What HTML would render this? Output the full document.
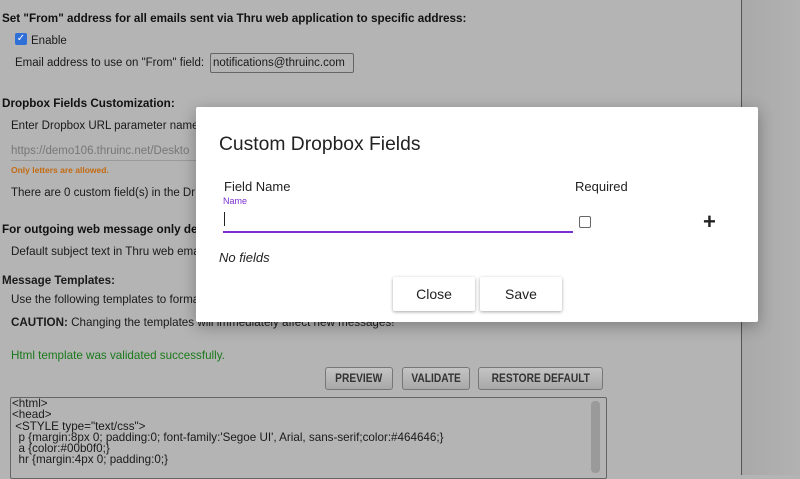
<!DOCTYPE html>
<html><head><style>
body{margin:0;width:800px;height:475px;overflow:hidden;background:#b4b4b4;font-family:"Liberation Sans",sans-serif;position:relative;color:#111}
.a{position:absolute;white-space:nowrap}
.b{font-weight:bold;font-size:11.7px}
.t{font-size:11.5px;color:#1a1a1a}
.n{font-size:12px;transform-origin:0 0;transform:scaleX(.97);color:#1a1a1a}
.btn{position:absolute;top:367px;height:21px;border:1px solid #777;border-radius:3px;background:linear-gradient(#c4c4c4,#a8a8a8);font-size:12px;font-weight:bold;color:#333;text-align:center;line-height:21px}
.mb{position:absolute;top:277px;height:34px;width:82px;background:#fff;box-shadow:0 1px 3px rgba(0,0,0,.35);font-size:14px;text-align:center;line-height:34px;color:#222;border-radius:2px}
</style></head><body>
<div class="a" style="left:741px;top:0;width:59px;height:475px;background:linear-gradient(90deg,#a9a9a9,#b2b2b2);border-left:1px solid #555"></div>
<div class="a b" style="left:2px;top:12px">Set "From" address for all emails sent via Thru web application to specific address:</div>
<div class="a" style="left:15px;top:33px;width:12px;height:12px;background:#2f6fd8;border-radius:2px;color:#fff;font-size:10px;line-height:12px;text-align:center">✓</div>
<div class="a t" style="left:31px;top:35px">Enable</div>
<div class="a t" style="left:15px;top:57px">Email address to use on "From" field:</div>
<div class="a t" style="left:210px;top:53px;height:20px;width:144px;border:1px solid #666;border-radius:2px;line-height:18px;padding-left:2px;box-sizing:border-box">notifications@thruinc.com</div>
<div class="a b" style="left:2px;top:97px">Dropbox Fields Customization:</div>
<div class="a t" style="left:11px;top:120px">Enter Dropbox URL parameter name</div>
<div class="a t" style="left:11px;top:145px;color:#777">https://demo106.thruinc.net/Deskto</div>
<div class="a" style="left:11px;top:160px;width:190px;border-top:1px solid #999"></div>
<div class="a" style="left:11px;top:165px;font-size:8.5px;font-weight:bold;color:#c46a10">Only letters are allowed.</div>
<div class="a t" style="left:11px;top:187px">There are 0 custom field(s) in the Dr</div>
<div class="a b" style="left:2px;top:223px">For outgoing web message only de</div>
<div class="a n" style="left:11px;top:244px">Default subject text in Thru web ema</div>
<div class="a n" style="left:2px;top:273px;font-weight:bold">Message Templates:</div>
<div class="a n" style="left:11px;top:292px">Use the following templates to forma</div>
<div class="a n" style="left:11px;top:315px"><b>CAUTION:</b> Changing the templates will immediately affect new messages!</div>
<div class="a n" style="left:11px;top:348px;color:#1a7a1a">Html template was validated successfully.</div>
<div class="btn" style="left:325px;width:66px"><span style="display:inline-block;transform:scaleX(.85)">PREVIEW</span></div>
<div class="btn" style="left:402px;width:66px"><span style="display:inline-block;transform:scaleX(.85)">VALIDATE</span></div>
<div class="btn" style="left:478px;width:123px"><span style="display:inline-block;transform:scaleX(.85)">RESTORE DEFAULT</span></div>
<div class="a" style="left:10px;top:397px;width:595px;height:80px;border:1px solid #666;border-radius:2px"></div>
<div class="a" style="left:591px;top:401px;width:9px;height:72px;background:#9a9a9a;border-radius:4px"></div>
<div class="a n" style="left:12px;top:398px;line-height:11.3px">&lt;html&gt;<br>&lt;head&gt;<br>&nbsp;&lt;STYLE type="text/css"&gt;<br>&nbsp;&nbsp;p {margin:8px 0; padding:0; font-family:'Segoe UI', Arial, sans-serif;color:#464646;}<br>&nbsp;&nbsp;a {color:#00b0f0;}<br>&nbsp;&nbsp;hr {margin:4px 0; padding:0;}</div>
<div class="a" style="left:196px;top:107px;width:562px;height:215px;background:#fff;box-shadow:0 4px 16px rgba(0,0,0,.3);border-radius:2px"></div>
<div class="a" style="left:219px;top:134px;font-size:19.3px;color:#222">Custom Dropbox Fields</div>
<div class="a" style="left:224px;top:179px;font-size:13px;color:#222">Field Name</div>
<div class="a" style="left:575px;top:179px;font-size:13px;color:#222">Required</div>
<div class="a" style="left:223px;top:196px;font-size:9px;color:#7a2fd0">Name</div>
<div class="a" style="left:224px;top:212px;width:1px;height:14px;background:#222"></div>
<div class="a" style="left:223px;top:231px;width:350px;height:2px;background:#7a2fd0"></div>
<div class="a" style="left:579px;top:216px;width:10px;height:10px;border:1px solid #666;border-radius:2px"></div>
<div class="a" style="left:703px;top:211px;font-size:22px;font-weight:bold;color:#222;line-height:22px">+</div>
<div class="a" style="left:219px;top:250px;font-size:13px;font-style:italic;color:#222">No fields</div>
<div class="mb" style="left:393px">Close</div>
<div class="mb" style="left:480px">Save</div>
</body></html>
